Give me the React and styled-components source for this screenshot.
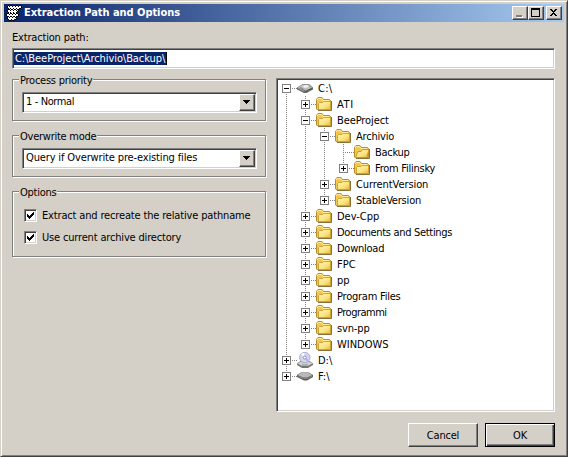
import React from "react";
import styled, { createGlobalStyle, css } from "styled-components";

const FACE = "#d4d0c8";
const SHADOW = "#808080";
const DARK = "#404040";

const GlobalStyle = createGlobalStyle`
  * { box-sizing: border-box; }
  html, body { margin: 0; padding: 0; }
  body {
    font-family: "DejaVu Sans Condensed", "DejaVu Sans", sans-serif;
    font-stretch: condensed;
    font-size: 11px;
    line-height: 14px;
    color: #000;
  }
`;

const sunken = css`
  background: #fff;
  border: 1px solid;
  border-color: ${SHADOW} #fff #fff ${SHADOW};
  box-shadow: inset 1px 1px 0 ${DARK}, inset -1px -1px 0 ${FACE};
`;

const raised = css`
  background: ${FACE};
  border: 1px solid;
  border-color: #fff ${DARK} ${DARK} #fff;
  box-shadow: inset -1px -1px 0 ${SHADOW};
`;

const Window = styled.div`
  width: 568px;
  height: 457px;
  padding: 3px;
  background: ${FACE};
  border: 1px solid;
  border-color: ${FACE} ${DARK} ${DARK} ${FACE};
  box-shadow: inset 1px 1px 0 #fff, inset -1px -1px 0 ${SHADOW};
`;

const TitleBar = styled.header`
  display: flex;
  align-items: center;
  height: 18px;
  padding: 0 2px;
  background: linear-gradient(90deg, #0a246a, #a6caf0);
`;

const Title = styled.h1`
  flex: 1;
  margin: 0 0 0 2px;
  font-size: 11px;
  line-height: 18px;
  font-weight: bold;
  color: #fff;
  white-space: pre;
  letter-spacing: -0.04px;
`;

const CaptionButton = styled.button`
  ${raised}
  display: block;
  width: 16px;
  height: 14px;
  padding: 0;
  margin-left: ${(p) => p.$gap || 0}px;
  svg { display: block; }
`;

const Body = styled.main`
  padding: 9px 8px 0;
`;

const Text = styled.span`
  white-space: pre;
  letter-spacing: ${(p) => p.$track || 0}px;
`;

const FieldLabel = styled.label`
  display: block;
  height: 17px;
`;

const PathField = styled.div`
  ${sunken}
  display: flex;
  align-items: center;
  width: 543px;
  height: 21px;
  padding: 0 1px;
`;

const Selection = styled.div`
  height: 13px;
  width: 153px;
  padding-left: 1px;
  line-height: 13px;
  color: #fff;
  background: #0a246a;
  border-right: 1px solid #000;
`;

const Columns = styled.div`
  display: flex;
  justify-content: space-between;
  width: 543px;
  margin-top: 9px;
`;

const Settings = styled.div`
  display: flex;
  flex-direction: column;
  gap: 14px;
  padding-top: 1px;
`;

const Group = styled.fieldset`
  width: 254px;
  height: ${(p) => p.$height}px;
  min-width: 0;
  margin: 0;
  padding: 0 9px;
  border: 1px solid ${SHADOW};
  box-shadow: 1px 1px 0 #fff, inset 1px 1px 0 #fff;
`;

const Legend = styled.div`
  width: fit-content;
  height: 14px;
  margin: -6px 0 0 -3px;
  padding: 0 1px;
  background: ${FACE};
`;

const Combo = styled.div`
  ${sunken}
  display: flex;
  align-items: center;
  width: 235px;
  height: 21px;
  margin-top: 4px;
  padding: 0 1px 0 3px;
  justify-content: space-between;
`;

const ComboText = styled(Text)`
  padding-bottom: 1px;
`;

const DropButton = styled.button`
  ${raised}
  width: 16px;
  height: 17px;
  padding: 0;
  svg { display: block; }
`;

const Options = styled.div`
  display: flex;
  flex-direction: column;
  gap: 9px;
  padding: 9px 0 0 2px;
`;

const Option = styled.div`
  display: flex;
  align-items: center;
  gap: 5px;
  height: 13px;
`;

const CheckBox = styled.span`
  ${sunken}
  width: 13px;
  height: 13px;
  svg { display: block; margin: 1px; }
`;

const Tree = styled.div`
  ${sunken}
  width: 279px;
  height: 334px;
  padding: 1px;
`;

const Row = styled.div`
  display: flex;
  align-items: center;
  height: 16px;
`;

const dots = `repeating-linear-gradient(180deg, ${SHADOW} 0 1px, transparent 1px 2px)`;

const Guide = styled.span`
  width: 19px;
  height: 16px;
  background: ${dots} 8px 0 / 1px 16px no-repeat;
`;

const Joint = styled.span`
  display: flex;
  align-items: center;
  width: 19px;
  height: 16px;
  padding-left: 4px;
  background:
    ${dots} 8px ${(p) => (p.$up ? 0 : 8)}px / 1px ${(p) => (p.$up ? 8 : 0) + (p.$down ? 8 : 0)}px no-repeat,
    repeating-linear-gradient(90deg, ${SHADOW} 0 1px, transparent 1px 2px) 8px 8px / 11px 1px no-repeat;
  svg { display: block; margin-top: 1px; }
`;

const Name = styled(Text)`
  margin-left: 5px;
  padding-top: 2px;
`;

const Footer = styled.footer`
  display: flex;
  justify-content: flex-end;
  gap: 7px;
  width: 543px;
  margin-top: 11px;
`;

const PushButton = styled.button`
  ${raised}
  width: 70px;
  height: 24px;
  padding: 2px 0 0;
  font: inherit;
  letter-spacing: -0.2px;
  color: #000;
  ${(p) => p.$default && css`
    border-color: #000;
    box-shadow: inset 1px 1px 0 #fff, inset -1px -1px 0 ${DARK}, inset -2px -2px 0 ${SHADOW};
  `}
`;

const Pixels = ({ rows, colors }) => (
  <svg width={rows[0].length} height={rows.length} shapeRendering="crispEdges">
    {rows.flatMap((row, y) =>
      [...row].map((c, x) =>
        colors[c] ? <rect key={`${x}-${y}`} x={x} y={y} width="1" height="1" fill={colors[c]} /> : null
      )
    )}
  </svg>
);

const BEE = [
  "..#.##.##.##.##.",
  ".#o#oo#oo#oo#oo#",
  ".#ooooooooooooo#",
  "..#o#oo#oo#oo##.",
  "..##o##o##o##...",
  ".#oo#oo#oo#o#...",
  ".#ooooooooo#....",
  "..#o#oo#oo#.....",
  ".##o##o##o##....",
  "#oo#oo#oo#oo#...",
  "#ooooooooooo#...",
  ".##o##o##o##....",
  ".#o#oo#oo#......",
  ".#oooooooo#.....",
  "..#oo#oo##......",
  "...##.##........",
];

const Folder = ({ open }) => (
  <svg width="16" height="16" viewBox="0 0 16 16">
    <defs>
      <linearGradient id="folderFace" x1="0" y1="0" x2="1" y2="1">
        <stop offset="0" stopColor="#fff8b8" />
        <stop offset="0.6" stopColor="#fbe27a" />
        <stop offset="1" stopColor="#e6b437" />
      </linearGradient>
    </defs>
    <path d="M2 14.5H15.5V5" fill="none" stroke="#8a713a" />
    <path d="M.5 13V3.5L2 1.5H6L7.5 3.5H13.5L14.5 4.5V13.5H1Z" fill="#f0c850" stroke="#b98c2c" />
    <path d="M1.5 4V3L2.5 2.5H5.5L7 4.5H13" fill="none" stroke="#fff0a0" />
    {open ? (
      <path d="M1.5 13.5L4 7.5H7L8.5 5.5H15L12.8 13.5Z" fill="url(#folderFace)" stroke="#c39731" />
    ) : (
      <path d="M2.5 13.5V7.5L3.5 6.5H7L8 5.5H14.5V13.5Z" fill="url(#folderFace)" stroke="#cfa23a" />
    )}
  </svg>
);

const HardDisk = () => (
  <svg width="16" height="16" viewBox="0 0 16 16">
    <path d="M0 7.5L6 4H12L16 7.5V9.5L9.5 13H7L0 9.5Z" fill="#666" />
    <path d="M.5 7.5L6 4.5H12L15.5 7.5L9 10.5Z" fill="#bcbcbc" />
    <path d="M5 6.5L8 5H11L12 6.5L8.5 8.2Z" fill="#ededed" />
    <path d="M3 7.5L6.5 9.2M12 5.5L14 7.5" stroke="#858585" />
    <path d="M1 8.3L7.5 11.3" stroke="#a4a4a4" />
    <path d="M10 11L14.5 8.8" stroke="#444" />
    <path d="M11.5 10.5h1" stroke="#7fbf7f" />
  </svg>
);

const Removable = () => (
  <svg width="16" height="16" viewBox="0 0 16 16">
    <path d="M0 7L4 4.5H12L16 7V9L10 12.5H7L0 9Z" fill="#5c5c5c" />
    <path d="M.5 7L4 5H12L15.5 7L10 9.5H6Z" fill="#b9b9b9" />
    <path d="M1 8L6.5 10.5H10L15 8.2" fill="none" stroke="#858585" />
  </svg>
);

const Optical = () => (
  <svg width="16" height="16" viewBox="0 0 16 16">
    <path d="M0 11.5L3.5 9H12.5L16 11.5V13L11 16H5L0 13Z" fill="#757575" />
    <path d="M.5 11.5L4 9.5H12L15.5 11.5L11 14H5Z" fill="#d0d0d0" />
    <circle cx="7.8" cy="5.5" r="5.2" fill="#d3d6f3" stroke="#a0a0b4" strokeWidth=".8" />
    <path d="M7.8 5.5L4 2.4A5 5 0 0 1 7 .8Z" fill="#fff" />
    <path d="M7.8 5.5L12 8A5 5 0 0 1 9.5 10Z" fill="#b2b7ea" />
    <circle cx="7.8" cy="5.5" r="1.5" fill="#fff" stroke="#7878b5" strokeWidth=".8" />
    <path d="M5 13H11" stroke="#8c8c8c" />
  </svg>
);

const Expander = ({ open }) => (
  <svg width="9" height="9" shapeRendering="crispEdges">
    <rect x=".5" y=".5" width="8" height="8" fill="#fff" stroke={SHADOW} />
    <path d={open ? "M2 4.5H7" : "M2 4.5H7M4.5 2V7"} stroke="#000" />
  </svg>
);

const Arrow = () => (
  <svg width="14" height="15" shapeRendering="crispEdges">
    <path d="M3 5H10V6H9V7H8V8H7V9H6V8H5V7H4V6H3Z" />
  </svg>
);

const Tick = () => (
  <svg width="9" height="9" shapeRendering="crispEdges">
    <path d="M1 3H2V4H3V5H4V4H5V3H6V2H7V1H8V4H7V5H6V6H5V7H4V8H3V7H2V6H1Z" />
  </svg>
);

const ICONS = { folder: <Folder />, open: <Folder open />, disk: <HardDisk />, cd: <Optical />, removable: <Removable /> };

// depth: number of ancestor columns whose connecting line runs past the row.
const NODES = [
  { name: "C:\\", icon: "disk", state: "-", depth: 0, first: true, track: 0.3 },
  { name: "ATI", state: "+", depth: 1, track: 0.6 },
  { name: "BeeProject", state: "-", depth: 1, track: -0.1 },
  { name: "Archivio", state: "-", depth: 2, track: -0.2 },
  { name: "Backup", icon: "open", depth: 3, track: -0.3 },
  { name: "From Filinsky", state: "+", depth: 3, last: true, track: -0.25 },
  { name: "CurrentVersion", state: "+", depth: 2, track: -0.08 },
  { name: "StableVersion", state: "+", depth: 2, last: true, track: -0.2 },
  { name: "Dev-Cpp", state: "+", depth: 1, track: 0 },
  { name: "Documents and Settings", state: "+", depth: 1, track: -0.31 },
  { name: "Download", state: "+", depth: 1, track: -0.25 },
  { name: "FPC", state: "+", depth: 1, track: 0 },
  { name: "pp", state: "+", depth: 1, track: 0 },
  { name: "Program Files", state: "+", depth: 1, track: -0.23 },
  { name: "Programmi", state: "+", depth: 1, track: -0.5 },
  { name: "svn-pp", state: "+", depth: 1, track: -0.15 },
  { name: "WINDOWS", state: "+", depth: 1, last: true, track: 0 },
  { name: "D:\\", icon: "cd", state: "+", depth: 0 },
  { name: "F:\\", icon: "removable", state: "+", depth: 0, last: true },
];

export default function App() {
  return (
    <>
      <GlobalStyle />
      <Window>
        <TitleBar>
          <Pixels rows={BEE} colors={{ "#": "#000", o: "#fff" }} />
          <Title>Extraction Path and Options</Title>
          <CaptionButton>
            <svg width="14" height="12" shapeRendering="crispEdges">
              <path d="M4 9H10V11H4Z" fill="#fff" />
              <path d="M3 8H9V10H3Z" fill={SHADOW} />
            </svg>
          </CaptionButton>
          <CaptionButton>
            <svg width="14" height="12" shapeRendering="crispEdges">
              <path d="M2 1H11V10H2ZM3 3V9H10V3Z" fillRule="evenodd" />
            </svg>
          </CaptionButton>
          <CaptionButton $gap={2}>
            <svg width="14" height="12" shapeRendering="crispEdges">
              <path d="M3 2H5V3H6V4H7V3H8V2H10V3H9V4H8V5H7V6H8V7H9V8H10V9H8V8H7V7H6V8H5V9H3V8H4V7H5V6H6V5H5V4H4V3H3Z" />
            </svg>
          </CaptionButton>
        </TitleBar>
        <Body>
          <FieldLabel><Text $track={-0.18}>Extraction path:</Text></FieldLabel>
          <PathField>
            <Selection><Text $track={-0.07}>{"C:\\BeeProject\\Archivio\\Backup\\"}</Text></Selection>
          </PathField>
          <Columns>
            <Settings>
              <Group $height={42}>
                <Legend><Text $track={-0.25}>Process priority</Text></Legend>
                <Combo><ComboText $track={-0.38}>1 - Normal</ComboText><DropButton><Arrow /></DropButton></Combo>
              </Group>
              <Group $height={42}>
                <Legend><Text $track={-0.25}>Overwrite mode</Text></Legend>
                <Combo><ComboText $track={-0.14}>Query if Overwrite pre-existing files</ComboText><DropButton><Arrow /></DropButton></Combo>
              </Group>
              <Group $height={66}>
                <Legend><Text $track={-0.25}>Options</Text></Legend>
                <Options>
                  <Option><CheckBox><Tick /></CheckBox><Text $track={-0.16}>Extract and recreate the relative pathname</Text></Option>
                  <Option><CheckBox><Tick /></CheckBox><Text $track={-0.17}>Use current archive directory</Text></Option>
                </Options>
              </Group>
            </Settings>
            <Tree>
              {NODES.map((n) => (
                <Row key={n.name}>
                  {Array.from({ length: n.depth }, (_, i) => <Guide key={i} />)}
                  <Joint $up={!n.first} $down={!n.last}>
                    {n.state && <Expander open={n.state === "-"} />}
                  </Joint>
                  {ICONS[n.icon || "folder"]}
                  <Name $track={n.track}>{n.name}</Name>
                </Row>
              ))}
            </Tree>
          </Columns>
          <Footer>
            <PushButton>Cancel</PushButton>
            <PushButton $default>OK</PushButton>
          </Footer>
        </Body>
      </Window>
    </>
  );
}
